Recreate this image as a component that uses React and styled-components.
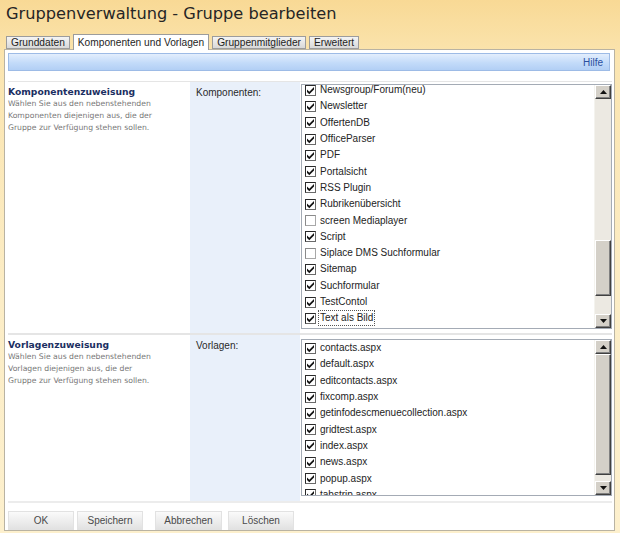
import React from "react";
import styled, { createGlobalStyle } from "styled-components";

const GlobalStyle = createGlobalStyle`
  html, body {
    margin: 0;
    padding: 0;
    background: #fcecc0;
  }
  body {
    font-family: "Liberation Sans", Arial, sans-serif;
  }
`;

const Page = styled.div`
  width: 620px;
  height: 533px;
  overflow: hidden;
  background: linear-gradient(#f8d995 0px, #fbe5b0 60px, #fcedc6 300px, #fdf0cd 533px);
`;

const Title = styled.h1`
  margin: 0;
  padding: 4px 0 0 6px;
  height: 31px;
  box-sizing: border-box;
  font-family: "DejaVu Sans", Verdana, sans-serif;
  font-weight: normal;
  font-size: 16.2px;
  line-height: 19px;
  color: #262626;
`;

const Tabs = styled.div`
  display: flex;
  align-items: flex-end;
  gap: 3px;
  padding-left: 6px;
  height: 18px;
`;

const Tab = styled.div`
  height: ${(p) => (p.$active ? "16px" : "13px")};
  padding: 0 4px;
  box-sizing: border-box;
  display: flex;
  align-items: center;
  font-size: 10.2px;
  color: #1e1e1e;
  border: 1px solid #9c9c9c;
  border-bottom: ${(p) => (p.$active ? "none" : "1px solid #9c9c9c")};
  background: ${(p) =>
    p.$active ? "#ffffff" : "linear-gradient(#f4f4f4, #d9d9d9)"};
  margin-bottom: ${(p) => (p.$active ? "-1px" : "0")};
  position: relative;
  z-index: ${(p) => (p.$active ? 2 : 1)};
`;

const Panel = styled.div`
  margin-left: 4px;
  width: 611px;
  height: 482px;
  box-sizing: border-box;
  background: #ffffff;
  border: 1px solid #b9b3a3;
  padding: 3px 2px 0 3px;
  display: flex;
  flex-direction: column;
`;

const HeaderBar = styled.div`
  height: 18px;
  margin-right: 2px;
  box-sizing: border-box;
  border: 1px solid #9dbbe6;
  background: linear-gradient(#e3eefd, #c3dbf9 55%, #b2cff5);
  display: flex;
  justify-content: flex-end;
  align-items: center;
  padding-right: 6px;
  margin-bottom: 10px;
`;

const HelpLink = styled.a`
  font-size: 10px;
  color: #2b4f9e;
  text-decoration: none;
`;

const Section = styled.div`
  display: grid;
  grid-template-columns: 182px 110px 1fr;
  height: ${(p) => p.$height}px;
  border-top: ${(p) => p.$rule}px solid #e5e5e5;
`;

const Info = styled.div`
  padding: 3px 0 0 0;
`;

const SectionTitle = styled.div`
  font-family: "DejaVu Sans", Verdana, sans-serif;
  font-weight: bold;
  font-size: 9.2px;
  line-height: 13px;
  color: #1b2f62;
`;

const Description = styled.div`
  font-family: "DejaVu Sans", Verdana, sans-serif;
  font-size: 7.7px;
  line-height: 12.2px;
  color: #777777;
`;

const LabelCell = styled.div`
  background: #e9f0fa;
  padding: 5px 0 0 6px;
  font-size: 10px;
  line-height: 12px;
  color: #2a2a2a;
`;

const FieldCell = styled.div`
  background: #ffffff;
  padding: ${(p) => p.$top}px 0 0 1px;
`;

const ListBox = styled.div`
  height: ${(p) => p.$height}px;
  box-sizing: border-box;
  border: 1px solid #a4abb5;
  display: flex;
  overflow: hidden;
`;

const ListItems = styled.div`
  flex: 1;
  overflow: hidden;
  padding-left: 3px;
`;

const ItemsInner = styled.div`
  margin-top: ${(p) => p.$offset}px;
`;

const Item = styled.div`
  height: 16.3px;
  display: flex;
  align-items: center;
  font-size: 10px;
  color: #242424;
`;

const Box = styled.span`
  width: 11px;
  height: 11px;
  box-sizing: border-box;
  border-top: 1px solid ${(p) => (p.$checked ? "#2a2a2a" : "#8a8a8a")};
  border-left: 1px solid ${(p) => (p.$checked ? "#2a2a2a" : "#8a8a8a")};
  border-right: 1px solid ${(p) => (p.$checked ? "#6a6a6a" : "#a8a8a8")};
  border-bottom: 1px solid ${(p) => (p.$checked ? "#6a6a6a" : "#a8a8a8")};
  background: #ffffff;
  margin-right: 2px;
  display: flex;
  align-items: center;
  justify-content: center;
  flex-shrink: 0;
`;

const ItemLabel = styled.span`
  padding: 1px 1px;
  border: 1px dotted ${(p) => (p.$focused ? "#555" : "transparent")};
  line-height: 12px;
`;

const ScrollBar = styled.div`
  width: 16px;
  display: flex;
  flex-direction: column;
  background: #ebe9e2;
  border-left: 1px solid #f4f3ee;
`;

const ScrollButton = styled.div`
  height: 14px;
  box-sizing: border-box;
  background: #d4d0c8;
  border-top: 1px solid #ffffff;
  border-left: 1px solid #ffffff;
  border-right: 1px solid #404040;
  border-bottom: 1px solid #404040;
  box-shadow: inset -1px -1px 0 #808080;
  display: flex;
  align-items: center;
  justify-content: center;
  flex-shrink: 0;
`;

const Track = styled.div`
  flex: 1;
  display: flex;
  flex-direction: column;
  background: #ece9e2;
`;

const Thumb = styled(ScrollButton)`
  height: ${(p) => p.$size}px;
  margin-top: ${(p) => p.$start}px;
`;

const Footer = styled.div`
  border-top: 2px solid #ececec;
  display: flex;
  padding-top: 8px;
  padding-left: 0;
`;

const Button = styled.button`
  width: ${(p) => p.$width}px;
  height: 19px;
  margin-left: ${(p) => p.$gap}px;
  border: 1px solid #e2e2e2;
  background: linear-gradient(#fafafa, #eeeeee 50%, #e2e2e2);
  font-family: "Liberation Sans", Arial, sans-serif;
  font-size: 10px;
  color: #4a4a4a;
  padding: 0;
`;

const Check = () => (
  <svg width="9" height="9" viewBox="0 0 9 9">
    <path d="M1 3.4 L3.3 5.8 L8 1 L8 3.5 L3.3 8.2 L1 5.9 Z" fill="#111" />
  </svg>
);

const Arrow = ({ down }) => (
  <svg width="7" height="4" viewBox="0 0 7 4">
    <polygon points={down ? "0,0 7,0 3.5,4" : "0,4 7,4 3.5,0"} fill="#111" />
  </svg>
);

const components = [
  ["Newsgroup/Forum(neu)", true],
  ["Newsletter", true],
  ["OffertenDB", true],
  ["OfficeParser", true],
  ["PDF", true],
  ["Portalsicht", true],
  ["RSS Plugin", true],
  ["Rubrikenübersicht", true],
  ["screen Mediaplayer", false],
  ["Script", true],
  ["Siplace DMS Suchformular", false],
  ["Sitemap", true],
  ["Suchformular", true],
  ["TestContol", true],
  ["Text als Bild", true, true],
];

const templates = [
  ["contacts.aspx", true],
  ["default.aspx", true],
  ["editcontacts.aspx", true],
  ["fixcomp.aspx", true],
  ["getinfodescmenuecollection.aspx", true],
  ["gridtest.aspx", true],
  ["index.aspx", true],
  ["news.aspx", true],
  ["popup.aspx", true],
  ["tabstrip.aspx", true],
];

const CheckList = ({ items, height, offset, thumbStart, thumbSize }) => (
  <ListBox $height={height}>
    <ListItems>
      <ItemsInner $offset={offset}>
        {items.map(([name, checked, focused]) => (
          <Item key={name}>
            <Box $checked={checked}>{checked && <Check />}</Box>
            <ItemLabel $focused={focused}>{name}</ItemLabel>
          </Item>
        ))}
      </ItemsInner>
    </ListItems>
    <ScrollBar>
      <ScrollButton>
        <Arrow />
      </ScrollButton>
      <Track>
        <Thumb $start={thumbStart} $size={thumbSize} />
      </Track>
      <ScrollButton>
        <Arrow down />
      </ScrollButton>
    </ScrollBar>
  </ListBox>
);

export default function App() {
  return (
    <Page>
      <GlobalStyle />
      <Title>Gruppenverwaltung - Gruppe bearbeiten</Title>
      <Tabs>
        <Tab>Grunddaten</Tab>
        <Tab $active>Komponenten und Vorlagen</Tab>
        <Tab>Gruppenmitglieder</Tab>
        <Tab>Erweitert</Tab>
      </Tabs>
      <Panel>
        <HeaderBar>
          <HelpLink href="#">Hilfe</HelpLink>
        </HeaderBar>

        <Section $height={251} $rule={1}>
          <Info>
            <SectionTitle>Komponentenzuweisung</SectionTitle>
            <Description>
              Wählen Sie aus den nebenstehenden
              <br />
              Komponenten diejenigen aus, die der
              <br />
              Gruppe zur Verfügung stehen sollen.
            </Description>
          </Info>
          <LabelCell>Komponenten:</LabelCell>
          <FieldCell $top={2}>
            <CheckList
              items={components}
              height={245}
              offset={-3}
              thumbStart={141}
              thumbSize={56}
            />
          </FieldCell>
        </Section>

        <Section $height={166} $rule={2}>
          <Info>
            <SectionTitle>Vorlagenzuweisung</SectionTitle>
            <Description>
              Wählen Sie aus den nebenstehenden
              <br />
              Vorlagen diejenigen aus, die der
              <br />
              Gruppe zur Verfügung stehen sollen.
            </Description>
          </Info>
          <LabelCell>Vorlagen:</LabelCell>
          <FieldCell $top={4}>
            <CheckList
              items={templates}
              height={157}
              offset={0}
              thumbStart={0}
              thumbSize={121}
            />
          </FieldCell>
        </Section>

        <Footer>
          <Button $width={66} $gap={0}>OK</Button>
          <Button $width={66} $gap={3}>Speichern</Button>
          <Button $width={67} $gap={12}>Abbrechen</Button>
          <Button $width={66} $gap={6}>Löschen</Button>
        </Footer>
      </Panel>
    </Page>
  );
}
